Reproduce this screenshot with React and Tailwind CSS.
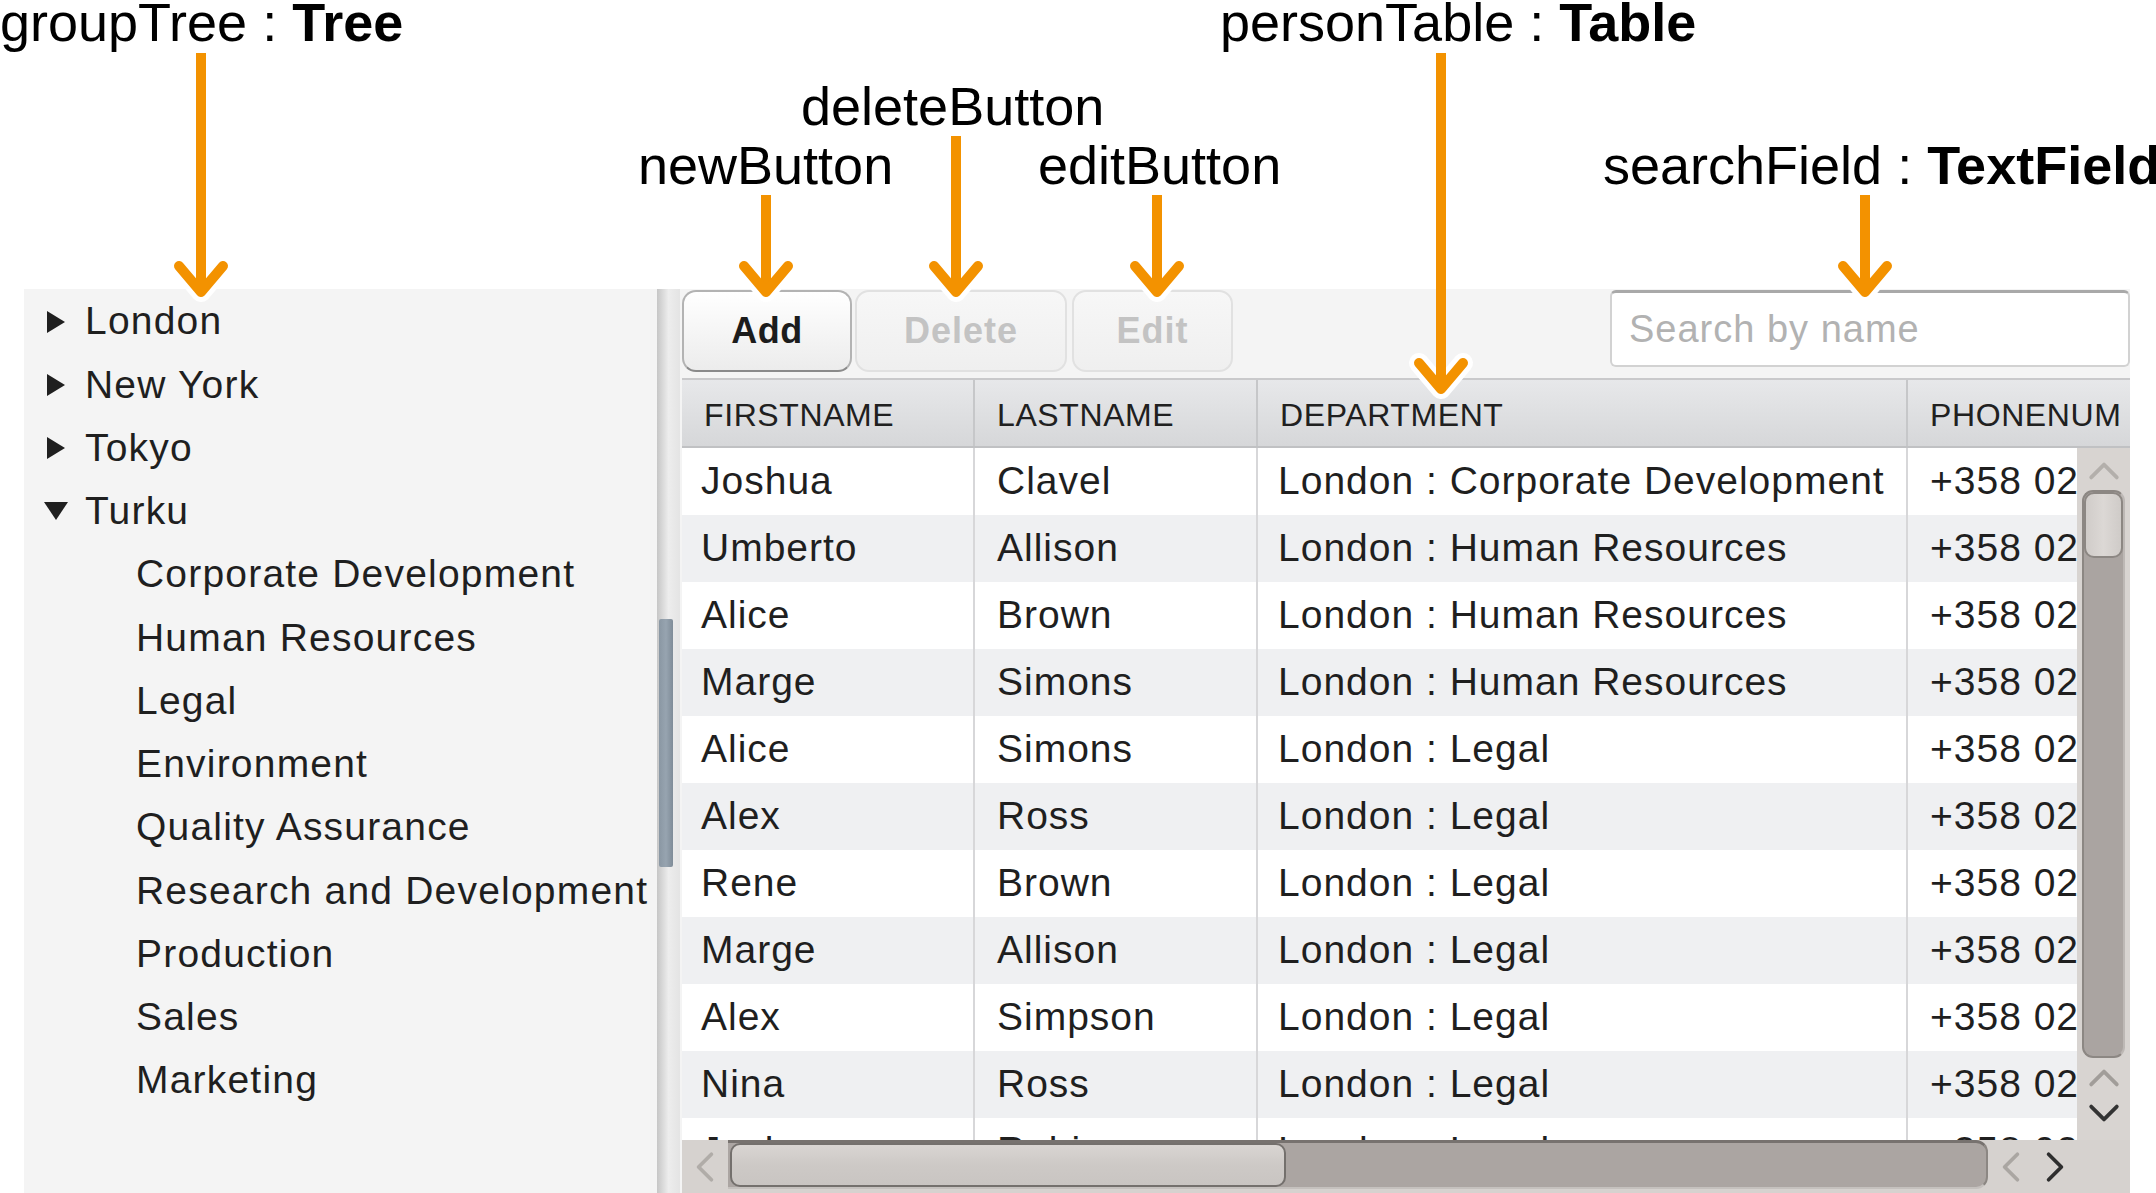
import React from 'react';

const FONT = { fontFamily: '"Liberation Sans", Arial, sans-serif' };

const groups = [
  { name: 'London', open: false },
  { name: 'New York', open: false },
  { name: 'Tokyo', open: false },
  { name: 'Turku', open: true },
];

const departments = [
  'Corporate Development',
  'Human Resources',
  'Legal',
  'Environment',
  'Quality Assurance',
  'Research and Development',
  'Production',
  'Sales',
  'Marketing',
];

const people = [
  ['Joshua', 'Clavel', 'London : Corporate Development', '+358 02 4462 3301'],
  ['Umberto', 'Allison', 'London : Human Resources', '+358 02 4462 1187'],
  ['Alice', 'Brown', 'London : Human Resources', '+358 02 4462 9024'],
  ['Marge', 'Simons', 'London : Human Resources', '+358 02 4462 5512'],
  ['Alice', 'Simons', 'London : Legal', '+358 02 4462 7730'],
  ['Alex', 'Ross', 'London : Legal', '+358 02 4462 2218'],
  ['Rene', 'Brown', 'London : Legal', '+358 02 4462 6645'],
  ['Marge', 'Allison', 'London : Legal', '+358 02 4462 3390'],
  ['Alex', 'Simpson', 'London : Legal', '+358 02 4462 8871'],
  ['Nina', 'Ross', 'London : Legal', '+358 02 4462 4409'],
  ['Jack', 'Robinson', 'London : Legal', '+358 02 4462 1156'],
];

// callout arrows: x, top of shaft, visual tip
const arrows = [
  [201, 53, 297],
  [766, 195, 297],
  [956, 136, 297],
  [1157, 195, 297],
  [1441, 53, 394],
  [1865, 195, 297],
];

const Chevron = ({ dir = 'up', color = '#333', w = 30, h = 18 }) => {
  const pts = {
    up: '3,15 15,3 27,15',
    down: '3,3 15,15 27,3',
    left: '15,3 3,15 15,27',
    right: '3,3 15,15 3,27',
  }[dir];
  const vb = dir === 'up' || dir === 'down' ? '0 0 30 18' : '0 0 18 30';
  return (
    <svg width={w} height={h} viewBox={vb}>
      <polyline points={pts} fill="none" stroke={color} strokeWidth="3.5" strokeLinecap="round" strokeLinejoin="round" />
    </svg>
  );
};

const Tree = () => (
  <div className="w-[633px] h-[904px] bg-[#f4f4f4] pt-[1px] text-[39px] tracking-[1.2px] text-[#1f1f1f]">
    {groups.map((g) => (
      <div key={g.name} className="flex items-center h-[63.25px] pl-[20px]">
        <span className="w-[24px] mr-[17px] flex justify-center">
          {g.open ? (
            <svg width="24" height="18" viewBox="0 0 24 18"><polygon points="0,0 24,0 12,18" fill="#1f1f1f" /></svg>
          ) : (
            <svg width="18" height="22" viewBox="0 0 18 22"><polygon points="0,0 18,11 0,22" fill="#1f1f1f" /></svg>
          )}
        </span>
        <span>{g.name}</span>
      </div>
    ))}
    {departments.map((d) => (
      <div key={d} className="flex items-center h-[63.25px] pl-[112px] whitespace-nowrap">{d}</div>
    ))}
  </div>
);

const Splitter = () => (
  <div className="w-[23px] h-[904px] flex flex-col bg-gradient-to-r from-[#c6c6c6] via-[#ededed] to-[#e4e4e4]">
    <div className="h-[330px]" />
    <div className="ml-[2px] w-[14px] h-[248px] bg-gradient-to-r from-[#8a97a3] via-[#97a4b0] to-[#7f8c98] rounded-[2px]" />
  </div>
);

const Toolbar = () => (
  <div className="h-[89px] flex items-start pt-[1px]">
    <button className="w-[170px] h-[82px] rounded-[14px] border-2 border-[#b3b3b3] border-b-[#8a8a8a] bg-gradient-to-b from-white to-[#ececec] text-[36px] font-bold text-[#1c1c1c] tracking-[0.5px]">
      Add
    </button>
    <button className="ml-[3px] w-[212px] h-[82px] rounded-[14px] border-2 border-[#e1e1e1] bg-gradient-to-b from-[#f7f7f7] to-[#efefef] text-[36px] font-bold text-[#c3c3c3] tracking-[1px]">
      Delete
    </button>
    <button className="ml-[5px] w-[161px] h-[82px] rounded-[14px] border-2 border-[#e1e1e1] bg-gradient-to-b from-[#f7f7f7] to-[#efefef] text-[36px] font-bold text-[#c3c3c3] tracking-[1px]">
      Edit
    </button>
    <div className="ml-auto w-[520px] h-[77px] rounded-[6px] border-2 border-[#d2d2d2] border-t-[3px] border-t-[#a9a9a9] bg-white flex items-center pl-[17px] text-[38px] tracking-[1px] text-[#b2b2b2]">
      Search by name
    </div>
  </div>
);

const headCols = [
  ['FIRSTNAME', 'w-[293px]'],
  ['LASTNAME', 'w-[283px]'],
  ['DEPARTMENT', 'w-[650px]'],
  ['PHONENUM', 'w-[222px]'],
];

const Header = () => (
  <div className="h-[70px] flex border-t-2 border-[#c9c9cb] border-b-2 border-b-[#c0c1c3] bg-gradient-to-b from-[#e7e8ea] to-[#d6d7d9] text-[32px] tracking-[0.6px] text-[#202020]">
    {headCols.map(([label, w], i) => (
      <div key={label} className={`${w} flex items-center pl-[22px] pt-[3px] overflow-hidden whitespace-nowrap ${i < 3 ? 'border-r-2 border-[#c6c7c9]' : ''}`}>
        {label}
      </div>
    ))}
  </div>
);

const Rows = () => (
  <div className="w-[1395px] h-full overflow-hidden bg-white text-[39px] tracking-[1px] text-[#1f1f1f]">
    {people.map((p, i) => (
      <div key={i} className={`h-[67px] flex ${i % 2 === 1 ? 'bg-[#eff0f2]' : 'bg-white'}`}>
        <div className="w-[293px] shrink-0 flex items-center pl-[19px] border-r-2 border-[#d7d7d9]">{p[0]}</div>
        <div className="w-[283px] shrink-0 flex items-center pl-[22px] border-r-2 border-[#d7d7d9]">{p[1]}</div>
        <div className="w-[650px] shrink-0 flex items-center pl-[20px] border-r-2 border-[#d7d7d9] whitespace-nowrap">{p[2]}</div>
        <div className="w-[300px] shrink-0 flex items-center pl-[22px] whitespace-nowrap">{p[3]}</div>
      </div>
    ))}
  </div>
);

const VScroll = () => (
  <div className="w-[53px] h-full bg-[#d8d4d1] flex flex-col items-center">
    <div className="h-[42px] pt-[4px] flex items-center justify-center">
      <Chevron dir="up" color="#b3afab" w={32} h={20} />
    </div>
    <div className="w-[43px] h-[568px] rounded-[11px] border-2 border-[#8c8783] border-r-[#bdb8b5] bg-[#aaa4a1] overflow-hidden">
      <div className="h-[66px] rounded-[10px] border-2 border-[#8c8783] bg-gradient-to-r from-[#d0ccc9] via-[#dcd8d5] to-[#cfcbc8]" />
    </div>
    <div className="mt-[10px] flex flex-col items-center gap-[15px]">
      <Chevron dir="up" color="#a19d99" w={32} h={20} />
      <Chevron dir="down" color="#333333" w={32} h={20} />
    </div>
  </div>
);

const HScroll = () => (
  <div className="h-[53px] bg-[#d6d2cf] flex items-start">
    <div className="w-[46px] h-full flex items-center justify-center">
      <Chevron dir="left" color="#b0aca8" w={20} h={32} />
    </div>
    <div className="w-[1260px] h-[49px] rounded-r-[12px] border-t-[3px] border-[#77726f] border-b-2 border-b-[#c5c1be] border-r-2 border-r-[#8c8783] bg-[#aba5a2] flex">
      <div className="w-[556px] h-full rounded-[10px] border-2 border-[#74706d] bg-gradient-to-b from-[#d9d5d2] via-[#cdc9c6] to-[#c9c5c2] ml-[2px]" />
    </div>
    <div className="h-full flex items-center pl-[13px] gap-[24px]">
      <Chevron dir="left" color="#aaa6a2" w={20} h={32} />
      <Chevron dir="right" color="#2e2e2e" w={20} h={32} />
    </div>
  </div>
);

const RightPanel = () => (
  <div className="w-[1450px] h-[904px] bg-[#f4f4f4] pl-[2px] flex flex-col">
    <Toolbar />
    <Header />
    <div className="h-[692px] flex">
      <Rows />
      <VScroll />
    </div>
    <HScroll />
  </div>
);

const Label = ({ className, light, bold }) => (
  <div className={`absolute whitespace-nowrap text-[54px] leading-[54px] text-black ${className}`}>
    {light}
    {bold && <span className="font-bold">{bold}</span>}
  </div>
);

export default function App() {
  return (
    <div className="relative w-[2156px] h-[1193px] overflow-hidden bg-white" style={FONT}>
      <div className="pt-[289px] pl-[24px] flex">
        <Tree />
        <Splitter />
        <RightPanel />
      </div>

      <Label className="left-[0px] top-[-5px]" light="groupTree : " bold="Tree" />
      <Label className="left-[1220px] top-[-5px]" light="personTable : " bold="Table" />
      <Label className="left-[801px] top-[79px]" light="deleteButton" />
      <Label className="left-[638px] top-[138px]" light="newButton" />
      <Label className="left-[1038px] top-[138px]" light="editButton" />
      <Label className="left-[1603px] top-[138px]" light="searchField : " bold="TextField" />

      <svg className="absolute left-0 top-0 pointer-events-none" width="2156" height="420">
        {arrows.map(([x, top, tip]) => (
          <g key={x}>
            <polyline points={`${x - 22},${tip - 31} ${x},${tip - 5} ${x + 22},${tip - 31}`} fill="none" stroke="#ffffff" strokeWidth="20" strokeLinecap="round" strokeLinejoin="round" />
            <line x1={x} y1={top} x2={x} y2={tip - 8} stroke="#f39200" strokeWidth="10" />
            <polyline points={`${x - 22},${tip - 31} ${x},${tip - 5} ${x + 22},${tip - 31}`} fill="none" stroke="#f39200" strokeWidth="10" strokeLinecap="round" strokeLinejoin="round" />
          </g>
        ))}
      </svg>
    </div>
  );
}
